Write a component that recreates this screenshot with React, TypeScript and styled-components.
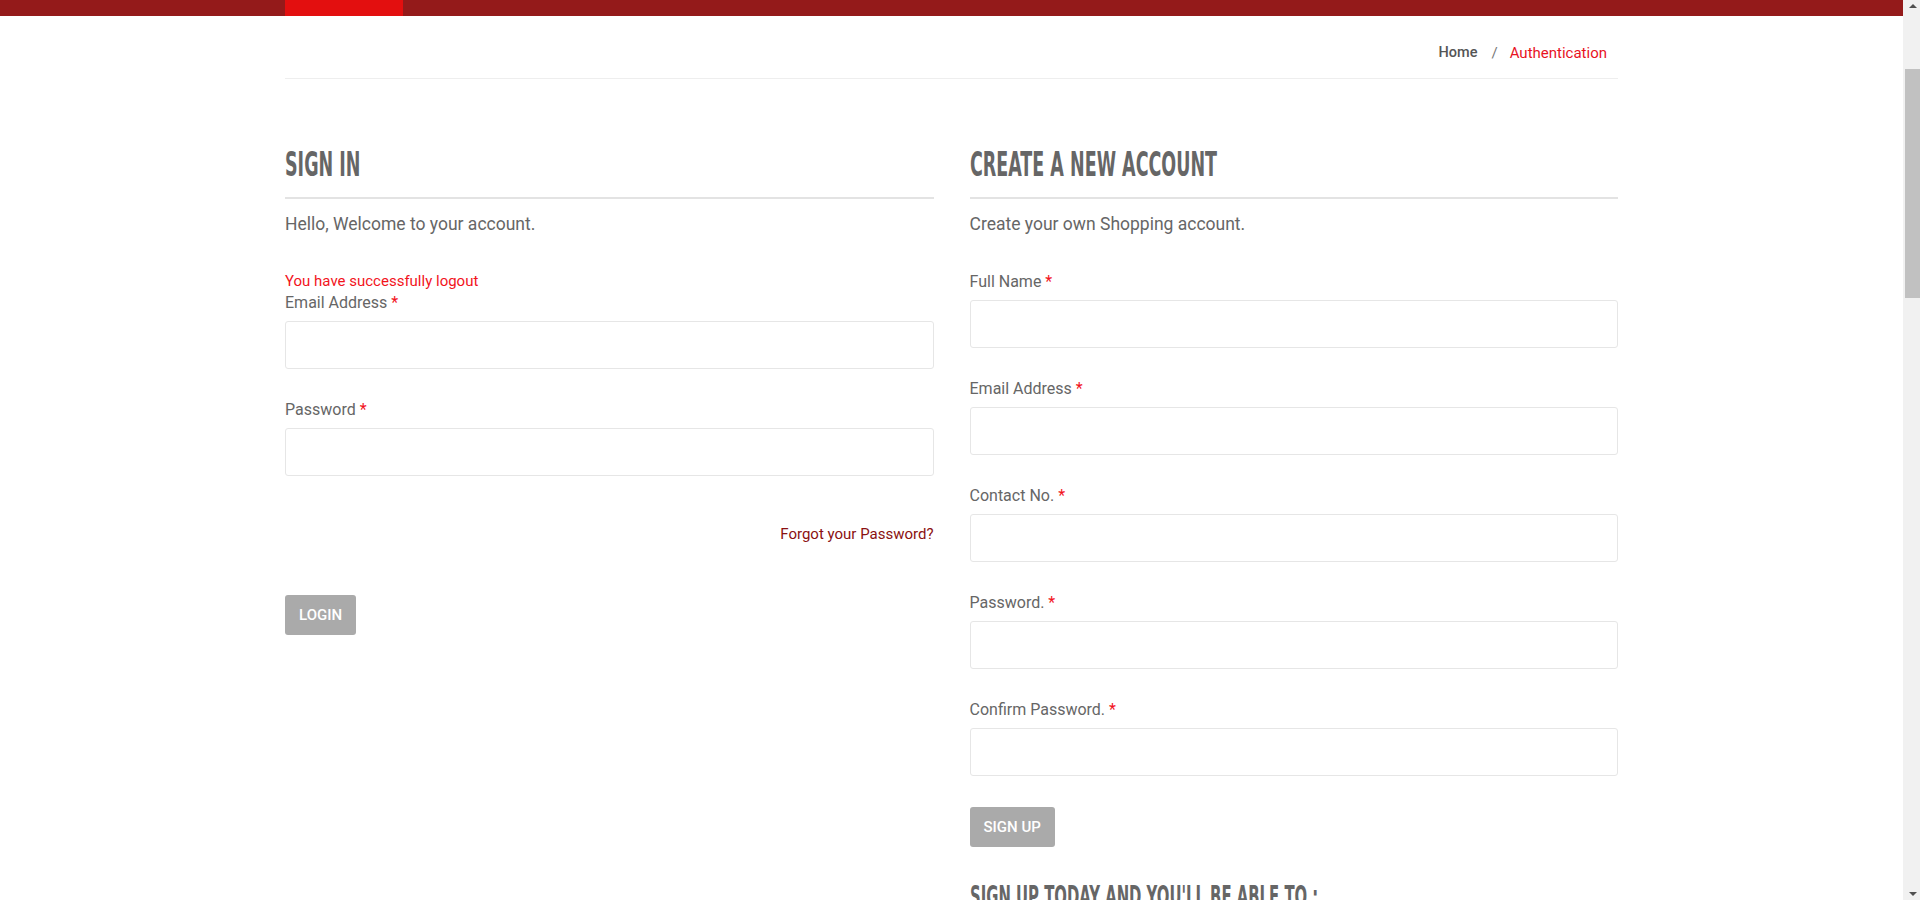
import React from 'react';
import styled, { createGlobalStyle } from 'styled-components';

const GlobalStyle = createGlobalStyle`
  html, body {
    margin: 0;
    padding: 0;
    background: #fff;
  }
  body {
    font-family: Roboto, "Liberation Sans", Arial, sans-serif;
    color: #666;
  }
  * {
    box-sizing: border-box;
  }
`;

type Field = { label: string; type: string };

const signUpFields: Field[] = [
  { label: 'Full Name', type: 'text' },
  { label: 'Email Address', type: 'email' },
  { label: 'Contact No.', type: 'text' },
  { label: 'Password.', type: 'password' },
  { label: 'Confirm Password.', type: 'password' },
];

const benefits = [
  'Speed your way through the checkout.',
  'Track your orders easily.',
  'Keep a record of all your purchases.',
];

const App: React.FC = () => {
  return (
    <Frame>
      <GlobalStyle />
      <Viewport>
        <TopBar>
          <Container>
            <ActiveTab />
          </Container>
        </TopBar>

        <Container>
          <Breadcrumb>
            <Crumb href="#">Home</Crumb>
            <Divider>/</Divider>
            <Crumb href="#" active>Authentication</Crumb>
          </Breadcrumb>

          <Columns>
            <Column>
              <SectionTitle>
                <Condensed>Sign in</Condensed>
              </SectionTitle>
              <Intro>Hello, Welcome to your account.</Intro>
              <Form>
                <Notice>You have successfully logout</Notice>
                <FormGroup>
                  <Label>
                    Email Address <Required>*</Required>
                  </Label>
                  <Input type="email" />
                </FormGroup>
                <FormGroup>
                  <Label>
                    Password <Required>*</Required>
                  </Label>
                  <Input type="password" />
                </FormGroup>
                <ForgotRow>
                  <ForgotLink href="#">Forgot your Password?</ForgotLink>
                </ForgotRow>
                <Button type="button" spacing={51}>Login</Button>
              </Form>
            </Column>

            <Column>
              <SectionTitle>
                <Condensed>Create a new account</Condensed>
              </SectionTitle>
              <Intro>Create your own Shopping account.</Intro>
              <Form offset={36}>
                {signUpFields.map((f) => (
                  <FormGroup key={f.label}>
                    <Label>
                      {f.label} <Required>*</Required>
                    </Label>
                    <Input type={f.type} />
                  </FormGroup>
                ))}
                <Button type="button" spacing={0}>Sign up</Button>
              </Form>
              <SubTitle>
                <Condensed>Sign up today and you'll be able to :</Condensed>
              </SubTitle>
              <Benefits>
                {benefits.map((b) => (
                  <li key={b}>{b}</li>
                ))}
              </Benefits>
            </Column>
          </Columns>
        </Container>
      </Viewport>

      {/* the window's classic scrollbar, page scrolled a little way down */}
      <ScrollTrack>
        <ScrollButton>
          <Arrow dir="up" />
        </ScrollButton>
        <Thumb offset={52} size={229} />
        <ScrollButton>
          <Arrow dir="down" />
        </ScrollButton>
      </ScrollTrack>
    </Frame>
  );
};

const Frame = styled.div`
  display: flex;
  height: 100vh;
  overflow: hidden;
`;

const Viewport = styled.main`
  flex: 1;
  min-width: 0;
  overflow: hidden;
`;

const ScrollTrack = styled.div`
  width: 17px;
  flex-shrink: 0;
  display: flex;
  flex-direction: column;
  background: #f1f1f1;
`;

const ScrollButton = styled.div`
  height: 17px;
  display: flex;
  align-items: center;
  justify-content: center;
  padding-left: 2px;
`;

const Arrow = styled.span<{ dir: 'up' | 'down' }>`
  width: 0;
  height: 0;
  border-left: 4.5px solid transparent;
  border-right: 4.5px solid transparent;
  ${(p) =>
    p.dir === 'up'
      ? 'border-bottom: 4px solid #505050; margin-bottom: 5px;'
      : 'border-top: 4px solid #505050; margin-top: 5px;'}
`;

const Thumb = styled.div<{ offset: number; size: number }>`
  margin: ${(p) => p.offset}px 0 auto 2px;
  height: ${(p) => p.size}px;
  background: #c1c1c1;
`;

const TopBar = styled.div`
  height: 16px;
  background: #941a1a;
`;

const Container = styled.div`
  width: 1333px;
  margin: 0 auto;
`;

const ActiveTab = styled.div`
  width: 118px;
  height: 16px;
  background: #e30f0f;
`;

const Breadcrumb = styled.nav`
  display: flex;
  justify-content: flex-end;
  align-items: center;
  padding: 27px 11px 15px 0;
  border-bottom: 1px solid #eee;
  font-size: 15px;
  line-height: 20px;
`;

const Crumb = styled.a<{ active?: boolean }>`
  color: ${(p) => (p.active ? '#e8131f' : '#555')};
  font-weight: ${(p) => (p.active ? 400 : 500)};
  font-size: ${(p) => (p.active ? 15 : 14.5)}px;
  text-decoration: none;
`;

const Divider = styled.span`
  color: #777;
  margin: 0 12px 0 14px;
`;

const Columns = styled.div`
  display: grid;
  grid-template-columns: 1fr 1fr;
  column-gap: 36px;
  padding-top: 68px;
`;

const Column = styled.section`
  display: flex;
  flex-direction: column;
`;

/* the heading face is a tall condensed display font; squeeze a condensed bold to match */
const Condensed = styled.span`
  display: inline-block;
  white-space: nowrap;
  transform: scaleX(0.59);
  transform-origin: left center;
`;

const SectionTitle = styled.h2`
  margin: 0;
  padding-bottom: 14px;
  border-bottom: 2px solid #e3e3e3;
  font-family: "DejaVu Sans Condensed", "Liberation Sans", sans-serif;
  font-weight: 700;
  font-size: 33px;
  line-height: 36px;
  text-transform: uppercase;
  color: #666;
`;

const Intro = styled.p`
  margin: 13px 0 0;
  font-size: 17.5px;
  line-height: 24px;
  color: #666;
`;

const Form = styled.form<{ offset?: number }>`
  display: flex;
  flex-direction: column;
  align-items: flex-start;
  margin-top: ${(p) => p.offset ?? 35}px;
`;

const Notice = styled.div`
  color: #f2141c;
  font-size: 15px;
  line-height: 20px;
  margin-bottom: 2px;
`;

const FormGroup = styled.div`
  width: 100%;
  display: flex;
  flex-direction: column;
  gap: 8px;
  margin-bottom: 31px;
`;

const Label = styled.label`
  font-size: 16px;
  line-height: 20px;
  color: #666;
`;

const Required = styled.span`
  color: #f2141c;
`;

const Input = styled.input`
  width: 100%;
  height: 48px;
  border: 1px solid #e6e6e6;
  border-radius: 3px;
  padding: 6px 12px;
  font-size: 15px;
  background: #fff;
  outline: none;
`;

const ForgotRow = styled.div`
  width: 100%;
  display: flex;
  justify-content: flex-end;
  margin-top: 17px;
`;

const ForgotLink = styled.a`
  color: #8b1111;
  font-size: 15px;
  line-height: 20px;
  text-decoration: none;
`;

const Button = styled.button<{ spacing: number }>`
  margin-top: ${(p) => p.spacing}px;
  height: 40px;
  padding: 0 14px;
  border: none;
  border-radius: 3px;
  background: #aaa;
  color: #fff;
  font-family: Roboto, "Liberation Sans", sans-serif;
  font-size: 15px;
  font-weight: 500;
  text-transform: uppercase;
  cursor: pointer;
`;

const SubTitle = styled.h3`
  margin: 35px 0 0;
  font-family: "DejaVu Sans Condensed", "Liberation Sans", sans-serif;
  font-weight: 700;
  font-size: 28px;
  line-height: 30px;
  text-transform: uppercase;
  color: #666;
`;

const Benefits = styled.ul`
  margin: 16px 0 0;
  padding-left: 20px;
  font-size: 15px;
  line-height: 28px;
`;

export default App;
